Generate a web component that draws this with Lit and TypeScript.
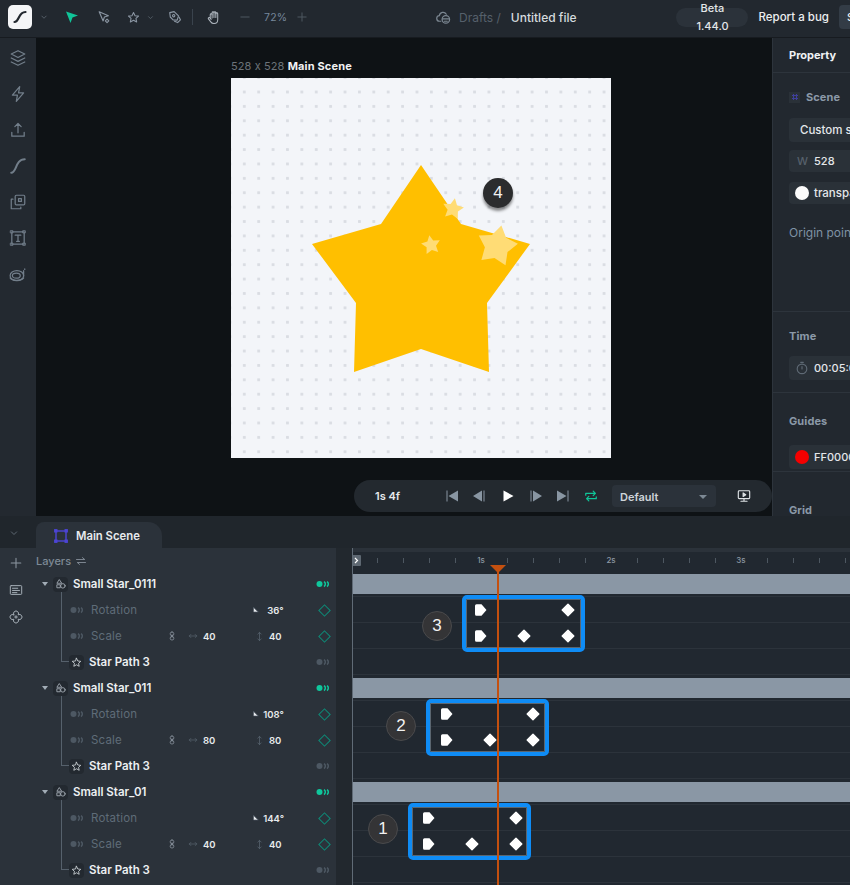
import { LitElement, html, css, svg } from "lit";
import { customElement } from "lit/decorators.js";

const ic = (size: number, body: unknown, color = "#8b96a3", sw = 1.3) => html`<svg class="ic" width=${size} height=${size} viewBox="0 0 16 16" fill="none" stroke=${color} stroke-width=${sw} stroke-linecap="round" stroke-linejoin="round">${body}</svg>`;

const starPts = (cx: number, cy: number, r: number, rot: number, inner = 0.5) => {
  const p: string[] = [];
  for (let i = 0; i < 10; i++) {
    const rr = i % 2 ? r * inner : r;
    const a = ((rot - 90 + i * 36) * Math.PI) / 180;
    p.push(`${(cx + rr * Math.cos(a)).toFixed(1)},${(cy + rr * Math.sin(a)).toFixed(1)}`);
  }
  return p.join(" ");
};

const I = {
  chev: svg`<path d="M4.5 6.5 8 10l3.5-3.5"/>`,
  node: svg`<path d="M2.5 2 13 6.5 8.5 8 7 12.5z"/><path d="m11.5 10.5 2 2-2 2-2-2z"/>`,
  star: svg`<path d="m8 1.8 1.9 4 4.3.5-3.2 2.9.9 4.3L8 11.3l-3.9 2.2.9-4.3L1.8 6.3l4.3-.5z"/>`,
  pen: svg`<path d="M2 3 7 1.8l5 5-1.5 4.7-4.7-.2L2.6 8z"/><circle cx="6.5" cy="6.5" r="1.3"/><path d="m7.5 12.8 3.5 1.6 3.2-3.2-1.6-3.2"/>`,
  hand: svg`<path d="M4.5 9V5a1 1 0 0 1 2 0V3a1 1 0 0 1 2 0v0a1 1 0 0 1 2 0v1a1 1 0 0 1 2 0v6.5c0 2.2-1.6 4-3.8 4H8.300c-1.400 0-2.400-.6-3.200-1.800L2.600 9.500c-.7-1.200.9-2.200 1.900-1L5.500 10"/><path d="M6.500 5v3.500M8.500 3v5M10.500 3v5"/>`,
  minus: svg`<path d="M2.500 8h11"/>`,
  plus: svg`<path d="M8 2.500v11M2.500 8h11"/>`,
  cloud: svg`<path d="M5 12H4a3 3 0 0 1-.4-6A4 4 0 0 1 11 4.500"/><circle cx="10.500" cy="10" r="4"/><path d="M7 9.500h7M9 12h3"/>`,
  layers: svg`<path d="m8 1.500 6 3-6 3-6-3z"/><path d="m2 8 6 3 6-3M2 11.500l6 3 6-3"/>`,
  bolt: svg`<path d="M9.500 1.500 3 9h4.500l-1 5.500L13 7H8.500z"/>`,
  upload: svg`<path d="M8 10.500V2.500M5.200 5 8 2.200 10.800 5"/><path d="M2.500 10v3.500h11V10"/>`,
  curve: svg`<path d="M2 14c5 0 3.500-12 12-12" stroke-width="1.800"/>`,
  copy: svg`<rect x="5.500" y="2" width="8.500" height="8.500" rx="1"/><rect x="8.500" y="5" width="2.500" height="2.500"/><path d="M3.500 5.500H2V14h8.500v-1.500"/>`,
  frame: svg`<rect x="2.500" y="2.500" width="11" height="11"/><path d="M5.500 5.500h5M8 5.500v5.500M6.800 11h2.400"/><path d="M1.500 1.500h2v2h-2zM12.500 1.500h2v2h-2zM1.500 12.500h2v2h-2zM12.500 12.500h2v2h-2z" stroke-width=".8"/>`,
  snail: svg`<ellipse cx="7" cy="9.500" rx="6" ry="4.500"/><ellipse cx="6.500" cy="9.500" rx="3.500" ry="2.200"/><path d="M13 10V5M14 3.500v.5M1 11.500c2 3 9 3 12 0"/>`,
  swap: svg`<path d="M2 6h11l-3-2.500M14 10H3l3 2.500"/>`,
  card: svg`<rect x="1.500" y="3" width="13" height="10" rx="1"/><path d="M4 6h6M4 8.500h8M4 11h5"/>`,
  flower: svg`<path d="M5.500 5.500A2.900 2.900 0 1 1 10.500 5.500 2.900 2.900 0 1 1 10.500 10.500 2.900 2.900 0 1 1 5.500 10.500 2.900 2.900 0 1 1 5.500 5.500z"/><path d="M6.500 8h3M8 6.500v3"/>`,
  shapes: svg`<path d="m6 2.500 3 4.500H3z"/><circle cx="10.500" cy="10.500" r="3"/><rect x="3" y="9" width="4" height="4"/>`,
  link: svg`<rect x="5" y="1.500" width="6" height="6" rx="3"/><rect x="5" y="8.500" width="6" height="6" rx="3"/><path d="M8 6v4"/>`,
  hArrow: svg`<path d="M2 8h12M4.500 5.500 2 8l2.500 2.500M11.500 5.500 14 8l-2.500 2.500"/>`,
  vArrow: svg`<path d="M8 2v12M5.500 4.500 8 2l2.500 2.500M5.500 11.500 8 14l2.500-2.500"/>`,
  angle: svg`<path d="M3 3v9h9z" fill="currentColor"/>`,
  timer: svg`<circle cx="8" cy="9" r="5.500"/><path d="M8 9V6.500M6.500 1.500h3"/>`,
  monitor: svg`<rect x="1.500" y="2" width="13" height="9" rx="1"/><path d="M7 4.500 10 6.500 7 8.500z" fill="currentColor"/><path d="M8 11v3M4.500 14h7"/>`,
  loop: svg`<path d="M2 7V5h11M10.500 2.500 13 5l-2.500 2.500M14 9v2H3M5.500 13.500 3 11l2.500-2.500"/>`,
};

const GROUPS = [
  { name: "Small Star_0111", rot: "36°", sx: "40", sy: "40" },
  { name: "Small Star_011", rot: "108°", sx: "80", sy: "80" },
  { name: "Small Star_01", rot: "144°", sx: "40", sy: "40" },
];
// keyframes are positions on the track, measured from the track's left edge
const TRACKS = [
  { first: 128, last: 215, mid: 171, num: "3", numX: 84, boxX: 109, numTop: 40 },
  { first: 94, last: 180, mid: 137, num: "2", numX: 48, boxX: 73, numTop: 36 },
  { first: 76, last: 163, mid: 119, num: "1", numX: 30, boxX: 55, numTop: 35 },
];

@customElement("app-root")
export class AppRoot extends LitElement {
  static styles = css`
    :host { display: block; width: 850px; height: 885px; overflow: hidden; background: #22282f; color: #e9ecef; font-family: Inter, "Liberation Sans", sans-serif; font-size: 11px; }
    * { box-sizing: border-box; }
    .ic { display: block; flex: none; }
    .top { height: 38px; display: flex; align-items: center; padding-bottom: 3px; background: #22282f; border-bottom: 1px solid #171b20; white-space: nowrap; overflow: hidden; }
    .top > * { flex: none; }
    .logo { width: 24px; height: 24px; margin-left: 8px; background: #f4f5f7; border-radius: 5px; display: flex; align-items: center; justify-content: center; }
    .t { display: flex; align-items: center; }
    .sep { width: 1px; height: 16px; background: #3a434d; }
    .zoomv { font-size: 10.5px; color: #76879b; width: 22px; text-align: center; letter-spacing: .2px; }
    .crumb { color: #56606b; font-size: 12px; }
    .file { color: #d5dade; font-size: 12px; font-weight: 500; }
    .beta { width: 72px; height: 19px; background: #2b323a; border-radius: 10px; display: flex; align-items: center; justify-content: center; text-align: center; font-size: 11px; font-weight: 500; line-height: 18px; color: #e3e6e9; }
    .beta span { display: block; width: 40px; flex: none; white-space: normal; }
    .report { font-size: 11.500px; font-weight: 500; color: #eceef0; }
    .share { width: 60px; height: 24px; background: #333c46; border-radius: 4px; padding-left: 8px; line-height: 24px; font-size: 11px; font-weight: 500; }
    .mid { height: 478px; display: flex; }
    .rail { width: 36px; flex: none; background: #232930; display: flex; flex-direction: column; align-items: center; padding-top: 11px; gap: 18px; }
    .canvas { flex: none; width: 736px; background: #0e1215; position: relative; padding: 21px 0 0 195px; }
    .label { font-size: 11px; height: 19px; line-height: 15px; color: #6c7379; letter-spacing: .1px; }
    .label b { color: #f0f1f2; font-weight: 700; letter-spacing: .15px; }
    .board { width: 380px; height: 380px; background-color: #f3f5f9; background-image: radial-gradient(circle, #dadde3 1.3px, transparent 1.8px); background-size: 14.4px 14.4px; background-position: 6.1px 6.8px; position: relative; }
    .board svg { display: block; }
    .num { position: absolute; width: 30px; height: 30px; border-radius: 50%; background: #343436; border: 1px solid #4a4a4c; color: #f2f2f2; display: flex; align-items: center; justify-content: center; font-size: 17px; font-family: "Liberation Sans", sans-serif; z-index: 3; }
    .num.dark { background: #2b2c2e; border: 0; left: 252px; top: 100px; box-shadow: 0 3px 3px rgba(0,0,0,.45); }
    .player { position: absolute; left: 318px; top: 442px; width: 418px; height: 32px; background: #23292f; border-radius: 16px; display: flex; align-items: center; }
    .pt { margin-left: 21px; width: 70px; font-size: 11px; font-weight: 600; color: #e6e9ec; }
    .pbtns { display: flex; align-items: center; }
    .sel { margin-left: 14px; width: 104px; height: 22px; background: #2b323a; border-radius: 4px; display: flex; align-items: center; justify-content: space-between; padding: 2px 9px 0 8px; font-size: 11px; font-weight: 600; color: #cfd4d9; }
    .caret { width: 0; height: 0; border-left: 4px solid transparent; border-right: 4px solid transparent; border-top: 4px solid #7d8994; }
    .panel { flex: 1; min-width: 0; background: #22282f; border-left: 1px solid #2d343c; overflow: hidden; }
    .ph { height: 35px; padding: 0 0 0 16px; line-height: 34px; font-weight: 700; font-size: 11px; color: #f0f2f4; border-bottom: 1px solid #2d343c; }
    .sec { padding: 0 0 0 16px; width: 220px; border-bottom: 1px solid #2d343c; }
    .hd { font-weight: 700; font-size: 11px; line-height: 13px; color: #8b99a8; letter-spacing: .1px; }
    .box { background: #2a3138; border-radius: 4px; height: 24px; width: 200px; display: flex; align-items: center; font-size: 11.500px; font-weight: 500; color: #e4e7ea; white-space: nowrap; }
    .box.num-v { font-size: 11px; }
    .sw { width: 14px; height: 14px; border-radius: 50%; flex: none; margin: 0 5px 0 6px; }
    .sceneTag { display: flex; align-items: center; gap: 6px; height: 18px; }
    .sq { width: 11px; height: 11px; background: #2a3138; display: flex; align-items: center; justify-content: center; }
    .sq i { width: 6px; height: 6px; display: block; background: radial-gradient(circle, #3f3f9b 1.2px, transparent 1.3px) 0 0 / 3px 3px; }
    .origin { color: #7f92a5; font-size: 12px; line-height: 13px; margin-top: 22px; height: 85px; }
    .tabs { height: 32px; background: #20262c; display: flex; align-items: flex-end; padding-left: 8px; }
    .tabchev { width: 28px; height: 32px; padding-top: 2px; display: flex; align-items: center; }
    .tab { width: 126px; height: 26px; background: #2b323a; border-radius: 8px 14px 0 0; display: flex; align-items: center; gap: 8px; padding-left: 18px; padding-top: 1px; font-size: 11.300px; font-weight: 600; color: #e8ebee; }
    .body { display: flex; height: 337px; background: #2b323a; }
    .lrail { width: 36px; flex: none; display: flex; flex-direction: column; align-items: center; padding: 8px 4px 0 0; gap: 13px; }
    .layers { width: 300px; flex: none; }
    .lhead { height: 23px; padding-top: 2px; display: flex; align-items: center; gap: 4px; color: #7e8a96; font-size: 11px; font-weight: 500; }
    .grp { position: relative; }
    .tree { position: absolute; left: 25px; top: 19px; width: 10px; height: 72px; border-left: 1px solid #56616c; border-bottom: 1px solid #56616c; }
    .row { height: 26px; display: flex; align-items: center; position: relative; white-space: nowrap; }
    .tri { width: 0; height: 0; margin-left: 6px; border-left: 3px solid transparent; border-right: 3px solid transparent; border-top: 4px solid #a2acb6; flex: none; }
    .ibox { width: 15px; height: 15px; background: #232930; border-radius: 4px; display: flex; align-items: center; justify-content: center; flex: none; }
    .gname { margin-left: 5px; font-weight: 600; font-size: 11.500px; color: #edf0f2; width: 235px; flex: none; }
    .pname { color: #5f6c78; font-size: 11.500px; letter-spacing: .2px; margin-left: 7px; }
    .dots { margin-left: 34px; flex: none; display: flex; align-items: center; }
    .val { font-size: 9.500px; font-weight: 600; color: #e7eaec; }
    .stat { width: 14px; height: 10px; margin-left: auto; margin-right: 6px; display: flex; align-items: center; justify-content: center; flex: none; }
    .dia { width: 9px; height: 9px; border: 1px solid #0e8a77; transform: rotate(45deg); margin-left: 3px; }
    .pathname { margin-left: 5px; font-weight: 600; font-size: 11.500px; color: #edf0f2; }
    .gut { width: 16px; flex: none; background: #22282e; }
    .tl { flex: 1; background: #212830; position: relative; min-width: 0; overflow: hidden; border-left: 1px solid #606b76; }
    .ruler { height: 23px; position: relative; border-top: 4px solid #2b323a; }
    .tick { position: absolute; top: 6px; width: 1px; height: 5px; background: #4d5761; }
    .sec-l { position: absolute; top: 3px; font-size: 8px; color: #8d98a3; transform: translateX(-50%); font-weight: 500; }
    .trow { height: 26px; border-bottom: 1px solid #2c333b; position: relative; }
    .bar { position: absolute; left: 0; right: 0; top: 3px; height: 20px; background: #8a97a5; }
    .kf { position: absolute; width: 14px; height: 14px; z-index: 1; }
    .sbox { position: absolute; width: 123px; height: 57px; border: 4px solid #0f8cf5; border-radius: 5px; box-shadow: inset 0 0 0 1px #5b6670; }
    .ph-line { position: absolute; left: 144px; top: 20px; bottom: 0; width: 2px; background: #c4500f; z-index: 2; }
    .ph-tri { position: absolute; left: 137px; top: 17px; width: 0; height: 0; border-left: 8px solid transparent; border-right: 8px solid transparent; border-top: 8px solid #c4500f; z-index: 2; }
    .handle { position: absolute; left: -1px; top: 3px; width: 9px; height: 11px; background: #5e6872; border-radius: 1px; color: #fff; z-index: 2; }
  `;

  private tb(size: number, ml: number, body: unknown, color?: string, sw?: number) {
    return html`<span class="t" style="margin-left:${ml}px">${ic(size, body, color, sw)}</span>`;
  }

  private top() {
    return html`<div class="top">
      <div class="logo"><svg width="16" height="16" viewBox="0 0 16 16" fill="none" stroke="#22282f" stroke-width="2.200" stroke-linecap="round"><path d="M2.500 13c5 0 3.500-10 11-10"/></svg></div>
      ${this.tb(10, 7, I.chev, "#5f6973")}
      <span class="t" style="margin-left:16px"><svg width="14" height="14" viewBox="0 0 14 14"><path d="M1 1.500 13 5.500 7.500 7.500 5.500 13z" fill="#10c498"/></svg></span>
      ${this.tb(14, 18, I.node)}
      ${this.tb(13, 16, I.star)}
      ${this.tb(9, 6, I.chev, "#5f6973")}
      ${this.tb(14, 13, I.pen)}
      <span class="sep" style="margin-left:10px"></span>
      ${this.tb(15, 13, I.hand, "#aeb6be", 1.1)}
      ${this.tb(12, 18, I.minus, "#4f5962")}
      <span class="zoomv" style="margin-left:13px">72%</span>
      ${this.tb(12, 10, I.plus, "#4f5962")}
      ${this.tb(15, 128, I.cloud, "#7b8691")}
      <span class="crumb" style="margin-left:8px">Drafts&nbsp;/</span>
      <span class="file" style="margin-left:10px">Untitled file</span>
      <span class="beta" style="margin-left:100px"><span>Beta 1.44.0</span></span>
      <span class="report" style="margin-left:10px">Report a bug</span>
      <span class="share" style="margin-left:10px">Share</span>
    </div>`;
  }

  private canvas() {
    const o = (x: number, y: number) => `${x - 231},${y - 78}`;
    const big = [[421,165],[461,224],[530,244],[487,303],[489,372],[421,349],[354,372],[356,303],[312,244],[381,224]].map(([x, y]) => o(x, y)).join(" ");
    return html`<div class="canvas">
      <div class="label">528 x 528 <b>Main Scene</b></div>
      <div class="board">
        <svg width="380" height="380" viewBox="0 0 380 380">
          <polygon points=${big} fill="#ffbf00"/>
          <polygon points=${starPts(222, 131, 11, 10)} fill="#ffdc75"/>
          <polygon points=${starPts(200, 167, 10, -10)} fill="#ffdc75"/>
          <polygon points=${starPts(266, 168, 21, 12, 0.58)} fill="#ffdc75"/>
        </svg>
        <div class="num dark">4</div>
      </div>
      <div class="player">
        <span class="pt">1s 4f</span>
        <span class="pbtns">
          <svg width="14" height="14" viewBox="0 0 14 14" fill="#8996a3"><path d="M13 1.500v11L3.500 7zM1.500 1.500h1v11h-1z"/></svg>
          <svg style="margin-left:13px" width="14" height="14" viewBox="0 0 14 14" fill="#8996a3"><path d="M10 1.500v11L1 7zM11.500 1.500h1v11h-1z"/></svg>
          <svg style="margin-left:15px" width="14" height="14" viewBox="0 0 14 14" fill="#fff"><path d="M2.500 1.500 12.500 7l-10 5.500z"/></svg>
          <svg style="margin-left:14px" width="14" height="14" viewBox="0 0 14 14" fill="#8996a3"><path d="M4 1.500v11L13 7zM1.500 1.500h1v11h-1z"/></svg>
          <svg style="margin-left:13px" width="14" height="14" viewBox="0 0 14 14" fill="#8996a3"><path d="M1 1.500v11L10.500 7zM11.500 1.500h1v11h-1z"/></svg>
          <span style="margin-left:14px">${ic(14, I.loop, "#10c498", 1.4)}</span>
        </span>
        <span class="sel">Default<span class="caret"></span></span>
        <span style="margin-left:21px;color:#dfe3e6">${ic(14, I.monitor, "#dfe3e6")}</span>
      </div>
    </div>`;
  }

  private panel() {
    return html`<div class="panel">
      <div class="ph">Property</div>
      <div class="sec" style="height:239px;padding-top:15px">
        <div class="sceneTag"><span class="sq"><i></i></span><span class="hd">Scene</span></div>
        <div class="box" style="margin-top:12px;padding-left:11px">Custom size</div>
        <div class="box num-v" style="margin-top:8px;height:22px;padding-left:8px"><span style="color:#56606b;margin-right:6px">W</span>528</div>
        <div class="box" style="margin-top:10px;height:22px"><span class="sw" style="background:#fbfbfb"></span>transparent</div>
        <div class="origin">Origin point</div>
      </div>
      <div class="sec" style="height:81px;padding-top:18px">
        <div class="hd">Time</div>
        <div class="box num-v" style="margin-top:13px;padding-left:6px">${ic(14, I.timer, "#5f6a75")}<span style="margin-left:5px">00:05:00</span></div>
      </div>
      <div class="sec" style="height:79px;padding-top:22px">
        <div class="hd">Guides</div>
        <div class="box num-v" style="margin-top:17px;height:24px"><span class="sw" style="background:#f50000"></span>FF0000</div>
      </div>
      <div class="sec" style="border:0;padding-top:32px"><div class="hd">Grid</div></div>
    </div>`;
  }

  private dots(color: string, first: string) {
    return html`<svg width="14" height="8" viewBox="0 0 14 8"><circle cx="3.500" cy="4" r="3" fill=${first}/><path d="M8 1.500a3 3 0 0 1 0 5M11 1.500a3 3 0 0 1 0 5" fill="none" stroke=${color} stroke-width="1.500"/></svg>`;
  }

  private group(g: (typeof GROUPS)[number]) {
    const scaleDots = this.dots("#4d5863", "#4d5863");
    return html`<div class="grp">
      <div class="tree"></div>
      <div class="row">
        <span class="tri"></span><span class="ibox" style="margin-left:5px">${ic(12, I.shapes, "#aab3bb", 1.1)}</span>
        <span class="gname">${g.name}</span>
        <span class="stat">${this.dots("#0fc79c", "#0fc79c")}</span>
      </div>
      <div class="row">
        <span class="dots">${scaleDots}</span><span class="pname">Rotation</span>
        <span class="t" style="margin-left:115px">${ic(8, I.angle, "#4d5863")}</span>
        <span class="val" style="margin-left:${g.rot.length > 3 ? 3 : 7}px;color:#e7eaec">${g.rot}</span>
        <span class="stat"><span class="dia"></span></span>
      </div>
      <div class="row">
        <span class="dots">${scaleDots}</span><span class="pname">Scale</span>
        <span class="t" style="margin-left:45px">${ic(10, I.link, "#8d97a1", 1.2)}</span>
        <span class="t" style="margin-left:11px">${ic(10, I.hArrow, "#55616c", 1.2)}</span>
        <span class="val" style="margin-left:5px;width:50px">${g.sx}</span>
        <span class="t" style="margin-left:1px">${ic(11, I.vArrow, "#55616c", 1.2)}</span>
        <span class="val" style="margin-left:4px">${g.sy}</span>
        <span class="stat"><span class="dia"></span></span>
      </div>
      <div class="row">
        <span class="ibox" style="margin-left:33px">${ic(11, I.star, "#d5dade", 1.200)}</span>
        <span class="pathname">Star Path 3</span>
        <span class="stat">${this.dots("#4d5863", "#4d5863")}</span>
      </div>
    </div>`;
  }

  private tracks() {
    const ticks = Array.from({ length: 20 }, (_, i) => i * 26 + 24);
    const kfP = (x: number, y: number) => html`<svg class="kf" style="left:${x - 7}px;top:${y - 7}px" viewBox="0 0 14 14"><path d="M2.500 1.200h5l5 5.800-5 5.800h-5a1.500 1.500 0 0 1-1.500-1.500V2.700a1.500 1.500 0 0 1 1.500-1.500z" fill="#fff"/></svg>`;
    const kfD = (x: number, y: number) => html`<svg class="kf" style="left:${x - 7}px;top:${y - 7}px" viewBox="0 0 14 14"><path d="M7 1.200 12.800 7 7 12.800 1.200 7z" fill="#fff" stroke="#fff" stroke-width="1.400" stroke-linejoin="round"/></svg>`;
    return html`<div class="tl">
      <div class="ruler">
        <span class="handle"><svg width="9" height="11" viewBox="0 0 9 11" fill="none" stroke="#fff" stroke-width="1.200"><path d="m3 3 2.500 2.500L3 8"/></svg></span>
        ${ticks.map((x) => ((x - 128) % 130 === 0 ? "" : html`<span class="tick" style="left:${x}px"></span>`))}
        ${["1s", "2s", "3s"].map((s, i) => html`<span class="sec-l" style="left:${128 + i * 130}px">${s}</span>`)}
      </div>
      ${TRACKS.map((t, gi) => {
        const top = 23 + gi * 104;
        return html`
          <div class="trow"><span class="bar"></span></div>
          <div class="trow"></div><div class="trow"></div><div class="trow"></div>
          <span class="sbox" style="left:${t.boxX}px;top:${top + 24}px"></span>
          ${kfP(t.first, top + 39)}${kfD(t.last, top + 39)}
          ${kfP(t.first, top + 65)}${kfD(t.mid, top + 65)}${kfD(t.last, top + 65)}
          <span class="num" style="left:${t.numX - 15}px;top:${top + t.numTop}px">${t.num}</span>`;
      })}
      <span class="ph-tri"></span>
      <span class="ph-line"></span>
    </div>`;
  }

  render() {
    return html`
      ${this.top()}
      <div class="mid">
        <div class="rail">
          ${[I.layers, I.bolt, I.upload, I.curve, I.copy, I.frame, I.snail].map((b) => ic(18, b, "#727e8a", 1.1))}
        </div>
        ${this.canvas()}
        ${this.panel()}
      </div>
      <div class="tabs">
        <span class="tabchev">${ic(12, I.chev, "#5f6973")}</span>
        <div class="tab">
          <svg width="14" height="14" viewBox="0 0 14 14" fill="none" stroke="#4d45d6" stroke-width="1.400"><rect x="2" y="2" width="10" height="10"/><rect x=".8" y=".8" width="2" height="2" fill="#4d45d6"/><rect x="11.200" y=".8" width="2" height="2" fill="#4d45d6"/><rect x=".8" y="11.200" width="2" height="2" fill="#4d45d6"/><rect x="11.200" y="11.200" width="2" height="2" fill="#4d45d6"/></svg>
          Main Scene
        </div>
      </div>
      <div class="body">
        <div class="lrail">
          ${ic(14, I.plus, "#8d97a1", 1.2)}
          ${ic(14, I.card, "#aab3bb", 1.1)}
          ${ic(14, I.flower, "#aab3bb", 1.1)}
        </div>
        <div class="layers">
          <div class="lhead">Layers ${ic(12, I.swap, "#8d97a1", 1.1)}</div>
          ${GROUPS.map((g) => this.group(g))}
        </div>
        <div class="gut"></div>
        ${this.tracks()}
      </div>`;
  }
}
